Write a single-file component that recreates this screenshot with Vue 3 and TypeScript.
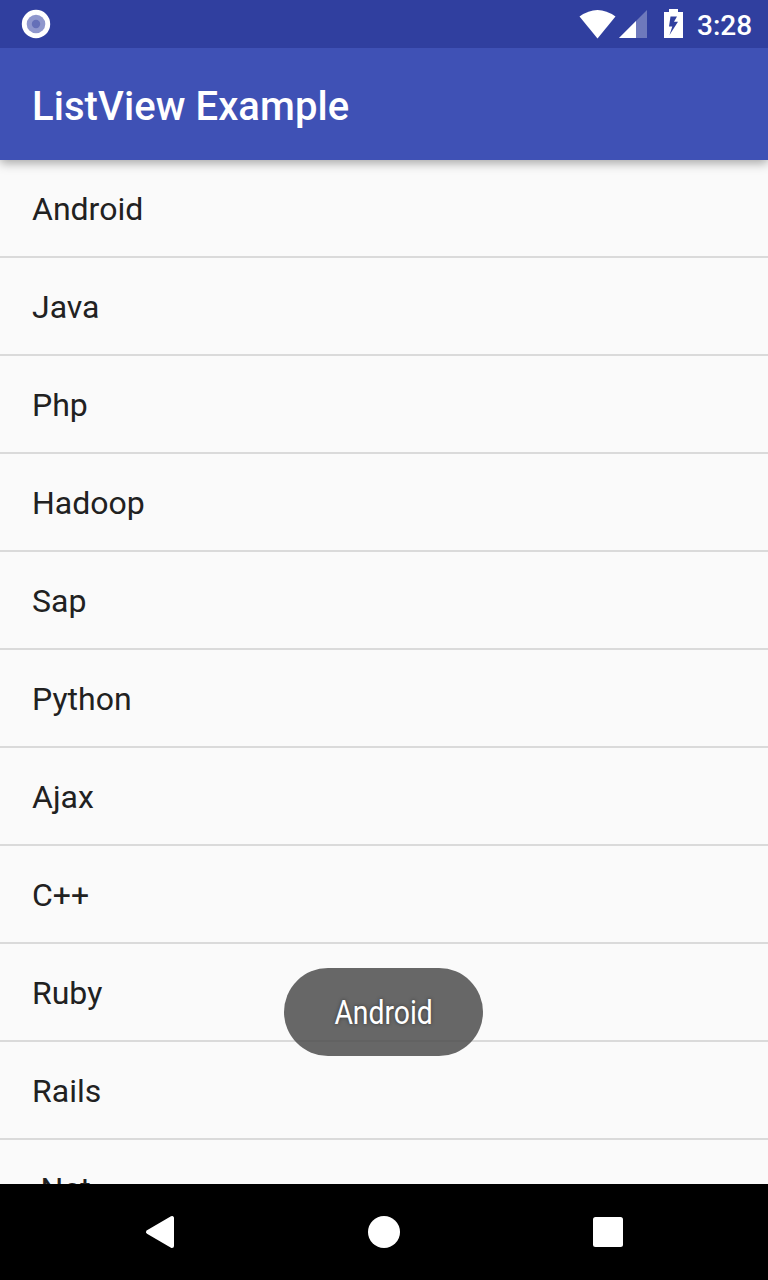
<script setup lang="ts">
const items: string[] = ['Android', 'Java', 'Php', 'Hadoop', 'Sap', 'Python', 'Ajax', 'C++', 'Ruby', 'Rails', '.Net']
</script>

<template>
  <div class="screen">
    <header class="status">
      <svg class="record" width="30" height="30" viewBox="0 0 30 30">
        <circle cx="15" cy="15" r="14.2" fill="#fff" />
        <circle cx="15" cy="15" r="9.3" fill="#8f97cd" />
        <circle cx="15" cy="15" r="4.2" fill="#6570b8" />
      </svg>
      <svg class="indicators" width="112" height="48" viewBox="576 0 112 48">
        <path d="M579.5 16.5Q597.5 3.5 615.5 16.5L597.5 38.5Z" fill="#fff" />
        <path d="M647 10V38H619Z" fill="#fff" opacity=".3" />
        <path d="M636 21V38H619Z" fill="#fff" />
        <path d="M669 9h9v3h5v26h-19V12h5zM670.5 16.5L669 26.500H672.300L669.500 35L678 21.800H674L677 16.500Z" fill="#fff" fill-rule="evenodd" />
      </svg>
      <span class="clock">3:28</span>
    </header>
    <div class="appbar"><h1>ListView Example</h1></div>
    <main class="list">
      <div v-for="item in items" :key="item" class="row"><span>{{ item }}</span></div>
    </main>
    <nav class="nav">
      <svg width="768" height="96" viewBox="0 1184 768 96" fill="#fff">
        <path d="M172 1218v28L148 1232Z" stroke="#fff" stroke-width="4" stroke-linejoin="round" />
        <circle cx="384" cy="1232" r="16" />
        <rect x="593" y="1217" width="30" height="30" rx="2.500" />
      </svg>
    </nav>
    <div class="toast"><span>Android</span></div>
  </div>
</template>

<style scoped>
.screen { position: relative; display: flex; flex-direction: column; width: 768px; height: 1280px; overflow: hidden; background: #fafafa; font-family: Roboto, sans-serif; }
.status { position: relative; z-index: 2; flex: 0 0 48px; display: flex; align-items: center; box-sizing: border-box; padding: 0 16px 0 21px; background: #303f9f; color: #fff; }
.indicators { margin-left: auto; }
.clock { width: 55px; margin-left: 9px; font-size: 28px; font-weight: 500; line-height: 44px; padding-top: 4px; white-space: nowrap; }
.appbar { flex: 0 0 112px; position: relative; z-index: 1; display: flex; align-items: center; box-sizing: border-box; padding: 6px 32px 0; background: #3f51b5; box-shadow: 0 3px 10px rgba(0, 0, 0, .35); }
h1 { margin: 0; color: #fff; font-size: 40px; font-weight: 500; line-height: 48px; letter-spacing: .08px; }
.list { flex: 1; min-height: 0; overflow: hidden; }
.row { height: 98px; box-sizing: border-box; display: flex; align-items: center; padding: 2px 32px 0; border-bottom: 2px solid #dadada; color: #212121; font-size: 32px; line-height: 38px; white-space: pre; }
.nav { flex: 0 0 96px; background: #000; }
.nav svg { display: block; }
.toast { position: absolute; z-index: 2; left: 284px; top: 968px; width: 199px; height: 88px; border-radius: 44px; display: flex; align-items: center; justify-content: center; box-sizing: border-box; padding-top: 2px; background: rgba(80, 80, 80, .87); color: #fff; font-size: 32px; text-shadow: 0 0 4px rgba(0, 0, 0, .5); }
.toast span { transform: scale(.885, 1.03); }
</style>
